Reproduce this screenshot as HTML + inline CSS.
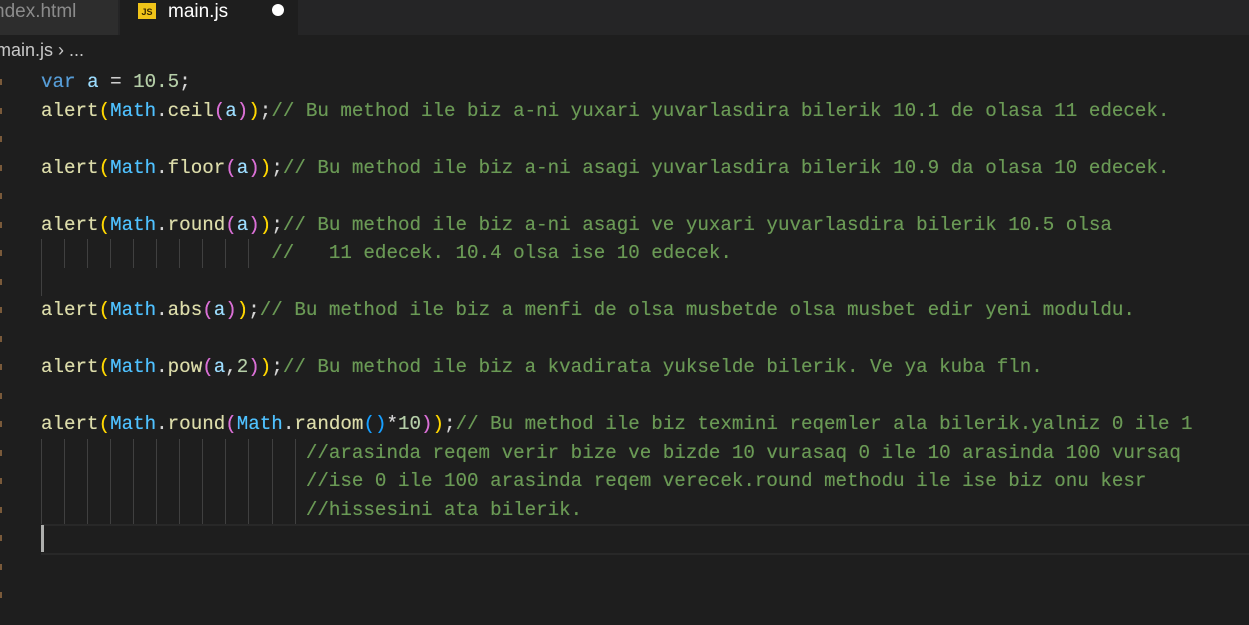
<!DOCTYPE html><html><head><style>
body{margin:0;width:1249px;height:625px;background:#1e1e1e;overflow:hidden;position:relative;font-family:"Liberation Sans",sans-serif}
.tabs{position:absolute;left:0;top:0;width:1249px;height:35px;background:#252526}
.t1{position:absolute;left:0;top:0;width:118px;height:35px;background:#2d2d2d;color:#8b8b8b;font-size:19px;line-height:24px}
.t2{position:absolute;left:120px;top:0;width:178px;height:35px;background:#1e1e1e;color:#fff;font-size:19px}
.js{position:absolute;left:18px;top:3px;width:18px;height:16px;background:#f0c419;color:#3a2a00;font-size:9px;font-weight:bold;text-align:center;line-height:19px}
.dot{position:absolute;left:152px;top:4px;width:12px;height:12px;border-radius:50%;background:#fff}
.bc{position:absolute;left:-4px;top:40px;color:#c8c8c8;font-size:18px}
.code{position:absolute;left:41px;top:0;font-family:"Liberation Mono",monospace;font-size:19.2px;white-space:pre;color:#d4d4d4;text-shadow:0 0 0.4px currentColor}
.l{position:absolute;left:0;height:28.5px;line-height:28.5px}
.k{color:#569cd6}.v{color:#9cdcfe}.n{color:#b5cea8}.f{color:#dcdcaa}.m{color:#4fc1ff}.c{color:#6a9955}
.b1{color:#ffd700}.b2{color:#da70d6}.b3{color:#179fff}
.g{position:absolute;width:1px;background:#404040}
.cur{position:absolute;left:41px;top:524px;width:1208px;height:27px;border-top:2px solid #282828;border-bottom:2px solid #282828}
.caret{position:absolute;left:41px;top:525px;width:3px;height:27px;background:#aeafad}
</style></head><body>
<div class="tabs"><div class="t1"><span style="position:absolute;left:-6px;top:0">ndex.html</span></div>
<div class="t2"><span class="js">JS</span><span style="position:absolute;left:48px;top:0px;line-height:24px">main.js</span><span class="dot"></span></div></div>
<div class="bc">main.js &#x203A; ...</div>
<div class="cur"></div><div class="caret"></div>
<div class="code">
<div class="l" style="top:68px"><span class="k">var</span> <span class="v">a</span> = <span class="n">10.5</span>;</div>
<div class="l" style="top:97px"><span class="f">alert</span><span class="b1">(</span><span class="m">Math</span>.<span class="f">ceil</span><span class="b2">(</span><span class="v">a</span><span class="b2">)</span><span class="b1">)</span>;<span class="c">// Bu method ile biz a-ni yuxari yuvarlasdira bilerik 10.1 de olasa 11 edecek.</span></div>
<div class="l" style="top:154px"><span class="f">alert</span><span class="b1">(</span><span class="m">Math</span>.<span class="f">floor</span><span class="b2">(</span><span class="v">a</span><span class="b2">)</span><span class="b1">)</span>;<span class="c">// Bu method ile biz a-ni asagi yuvarlasdira bilerik 10.9 da olasa 10 edecek.</span></div>
<div class="l" style="top:211px"><span class="f">alert</span><span class="b1">(</span><span class="m">Math</span>.<span class="f">round</span><span class="b2">(</span><span class="v">a</span><span class="b2">)</span><span class="b1">)</span>;<span class="c">// Bu method ile biz a-ni asagi ve yuxari yuvarlasdira bilerik 10.5 olsa</span></div>
<div class="l" style="top:239px">                    <span class="c">//   11 edecek. 10.4 olsa ise 10 edecek.</span></div>
<div class="l" style="top:296px"><span class="f">alert</span><span class="b1">(</span><span class="m">Math</span>.<span class="f">abs</span><span class="b2">(</span><span class="v">a</span><span class="b2">)</span><span class="b1">)</span>;<span class="c">// Bu method ile biz a menfi de olsa musbetde olsa musbet edir yeni moduldu.</span></div>
<div class="l" style="top:353px"><span class="f">alert</span><span class="b1">(</span><span class="m">Math</span>.<span class="f">pow</span><span class="b2">(</span><span class="v">a</span>,<span class="n">2</span><span class="b2">)</span><span class="b1">)</span>;<span class="c">// Bu method ile biz a kvadirata yukselde bilerik. Ve ya kuba fln.</span></div>
<div class="l" style="top:410px"><span class="f">alert</span><span class="b1">(</span><span class="m">Math</span>.<span class="f">round</span><span class="b2">(</span><span class="m">Math</span>.<span class="f">random</span><span class="b3">()</span>*<span class="n">10</span><span class="b2">)</span><span class="b1">)</span>;<span class="c">// Bu method ile biz texmini reqemler ala bilerik.yalniz 0 ile 1</span></div>
<div class="l" style="top:439px">                       <span class="c">//arasinda reqem verir bize ve bizde 10 vurasaq 0 ile 10 arasinda 100 vursaq</span></div>
<div class="l" style="top:467px">                       <span class="c">//ise 0 ile 100 arasinda reqem verecek.round methodu ile ise biz onu kesr</span></div>
<div class="l" style="top:496px">                       <span class="c">//hissesini ata bilerik.</span></div>
</div>
<div id="guides"></div>
<script>
var h='';
for(var i=0;i<10;i++)h+='<div class="g" style="left:'+(41+i*23.05)+'px;top:239px;height:28.5px"></div>';
h+='<div class="g" style="left:41px;top:267px;height:28.5px"></div>';
for(var i=0;i<12;i++)h+='<div class="g" style="left:'+(41+i*23.05)+'px;top:439px;height:85px"></div>';
var ys=[82,111,139,168,196,225,253,282,310,339,367,396,424,453,481,510,538,567,595];
for(var j=0;j<ys.length;j++)h+='<div style="position:absolute;left:0;top:'+(ys[j]-3)+'px;width:2px;height:6px;background:#7a5a3a"></div>';
document.getElementById('guides').innerHTML=h;
</script>
</body></html>
